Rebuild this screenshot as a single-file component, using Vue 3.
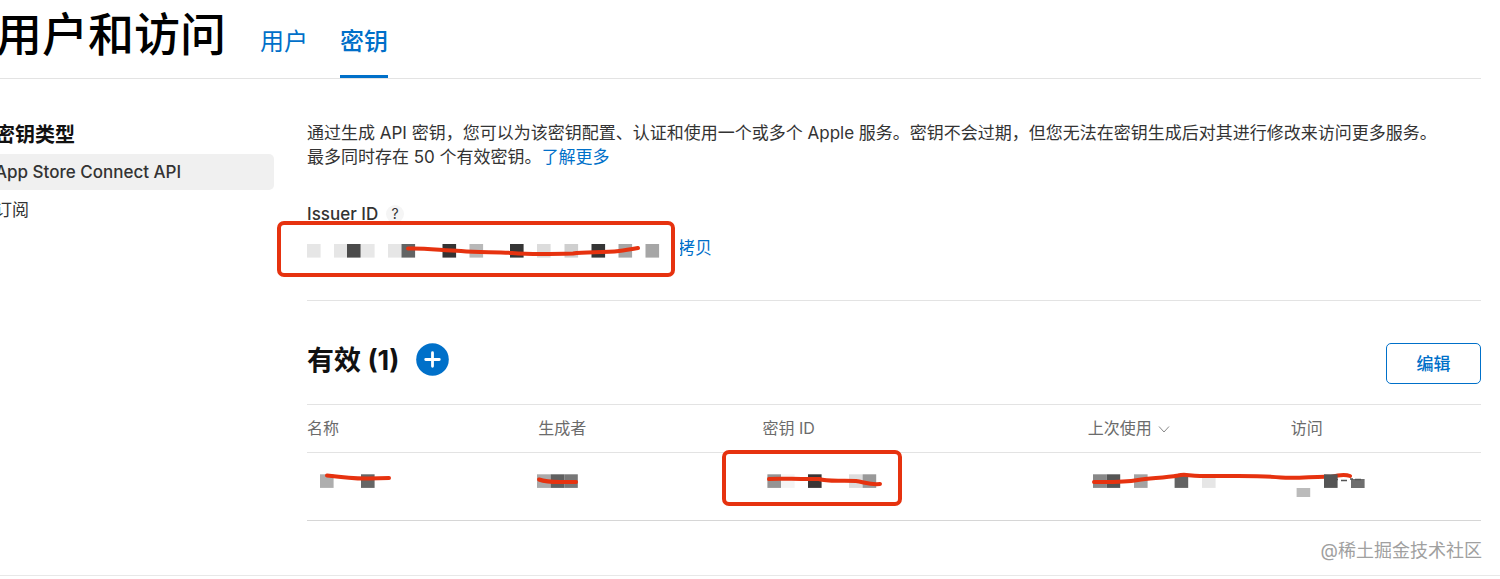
<template>
  <div class="page">
    <header class="page-header">
      <h1 class="page-title">用户和访问</h1>
      <nav class="tabs">
        <a
          v-for="tab in tabs"
          :key="tab"
          href="#"
          class="tab"
          :class="{ active: tab === activeTab }"
          @click.prevent="activeTab = tab"
          >{{ tab }}</a
        >
      </nav>
    </header>

    <div class="page-body">
      <aside class="sidebar">
        <h2 class="sidebar-title">密钥类型</h2>
        <a
          v-for="item in keyTypes"
          :key="item"
          href="#"
          class="sidebar-item"
          :class="{ active: item === activeType }"
          @click.prevent="activeType = item"
          >{{ item }}</a
        >
      </aside>

      <main class="content">
        <section class="intro">
          <p class="description">
            通过生成 API 密钥，您可以为该密钥配置、认证和使用一个或多个 Apple
            服务。密钥不会过期，但您无法在密钥生成后对其进行修改来访问更多服务。<br />最多同时存在 50
            个有效密钥。<a href="#">了解更多</a>
          </p>
          <div class="issuer-label">
            <span>Issuer ID</span>
            <button class="help-button" aria-label="帮助">?</button>
          </div>
          <div class="issuer-row">
            <div class="issuer-value">
              <svg class="mosaic" width="353" height="14" viewBox="0 0 353 14">
                <rect
                  v-for="(b, i) in issuerBlocks"
                  :key="i"
                  :x="b[0]"
                  y="0"
                  width="13.6"
                  height="13.6"
                  :fill="b[1]"
                />
                <path
                  class="scribble"
                  d="M101 4.500C118 4 132 6 154 7C172 9 188 7.500 205 9C222 10.500 248 10 266 9.500C278 7.500 296 9 312 7C319 6 325 5 331 4"
                />
              </svg>
              <span class="mark-box issuer-mark"></span>
            </div>
            <button class="copy-button">拷贝</button>
          </div>
        </section>

        <section class="keys">
          <div class="keys-header">
            <h2 class="keys-title">有效 (1)</h2>
            <button class="add-button" aria-label="添加">
              <svg width="33" height="33" viewBox="0 0 33 33">
                <circle cx="16.5" cy="16.5" r="16.3" fill="#0070c9" />
                <path
                  d="M16.500 9.700V23.300M9.700 16.500H23.300"
                  stroke="#fff"
                  stroke-width="2.800"
                  stroke-linecap="round"
                />
              </svg>
            </button>
            <button class="edit-button">编辑</button>
          </div>

          <table class="keys-table">
            <thead>
              <tr>
                <th class="col-name">名称</th>
                <th class="col-creator">生成者</th>
                <th class="col-id">密钥 ID</th>
                <th class="col-last">
                  上次使用
                  <svg class="sort-icon" width="12" height="8" viewBox="0 0 12 8">
                    <path d="M1 0.500L6 6L11 0.500" fill="none" stroke="#888" />
                  </svg>
                </th>
                <th>访问</th>
              </tr>
            </thead>
            <tbody>
              <tr>
                <td v-for="cell in keyRow" :key="cell.name">
                  <div class="cell-value">
                    <svg class="mosaic" width="120" height="14" viewBox="0 0 120 14">
                      <rect
                        v-for="(b, i) in cell.blocks"
                        :key="i"
                        :x="b[0]"
                        :y="b[2] || 0.3"
                        width="13.6"
                        :height="b[3] || 13.6"
                        :fill="b[1]"
                      />
                      <path
                        v-if="cell.name === 'access'"
                        d="M43 5.500H47M50 6.500H56M59 5H62M64 5.500H70"
                        stroke="#555"
                        stroke-width="1.500"
                      />
                      <path v-if="cell.line" class="scribble" :d="cell.line" />
                    </svg>
                    <span v-if="cell.name === 'id'" class="mark-box id-mark"></span>
                  </div>
                </td>
              </tr>
            </tbody>
          </table>
        </section>
      </main>
    </div>

    <footer class="page-footer">@稀土掘金技术社区</footer>
  </div>
</template>

<script setup>
import { ref } from 'vue'

const tabs = ['用户', '密钥']
const activeTab = ref('密钥')

const keyTypes = ['App Store Connect API', '订阅']
const activeType = ref('App Store Connect API')

// masked blocks: [x, color]
const issuerBlocks = [
  [0, '#e6e6e6'],
  [27, '#e6e6e6'],
  [40, '#4b4b4b'],
  [54, '#e8e8e8'],
  [81, '#e6e6e6'],
  [94.5, '#626464'],
  [135.5, '#353333'],
  [162.5, '#b8b8b8'],
  [203, '#353535'],
  [230, '#dcdcdc'],
  [257.5, '#cfcfcf'],
  [284.5, '#353535'],
  [311.5, '#a6a6a6'],
  [338.5, '#a6a6a6'],
]

// blocks: [x, color, y, height]
const keyRow = [
  {
    name: 'name',
    blocks: [
      [13, '#aeaeae'],
      [54, '#666'],
    ],
    line: 'M20 1.500C32 3 48 5 62 4.500L82 4',
  },
  {
    name: 'creator',
    blocks: [
      [-1, '#aaa'],
      [12.6, '#606060'],
      [26.2, '#777'],
    ],
    line: 'M1 5.500C8 8 14 8 22 8H38',
  },
  {
    name: 'id',
    blocks: [
      [5.4, '#949494'],
      [19, '#f4f4f4'],
      [46, '#3a3535'],
      [87, '#ddd'],
      [100.6, '#999'],
    ],
    line: 'M7 5C20 4 34 5.500 57 5C66 8 80 6 94 7C102 8 108 11 118 10',
  },
  {
    name: 'last',
    blocks: [
      [5, '#888'],
      [18.6, '#555'],
      [46, '#a3a3a3'],
      [86.6, '#636363'],
      [114, '#e6e6e6', 0.3, 13.6],
    ],
    line: 'M6 8C20 8 35 8.500 50 6C62 4 76 4 90 1.500C98 -0.500 100 2 112 2C144 2.500 170 1 193 3.500C210 5 228 2 243 3C250 1 257 0 262 2',
  },
  {
    name: 'access',
    blocks: [
      [5.6, '#bbb', 14, 9],
      [33, '#555'],
      [60, '#6e6e6e', 5, 9],
    ],
  },
]
</script>

<style>
body {
  margin: 0;
  background-color: #fff;
}
</style>

<style scoped>
.page {
  font-family: Inter, 'Noto Sans CJK SC', sans-serif;
  font-size: 17px;
  color: #333;
  overflow: hidden;
  border-bottom: 1px solid #e8e8e8;
}

h1,
h2,
p {
  margin: 0;
}

a {
  color: #0070c9;
  text-decoration: none;
}

button {
  padding: 0;
  border: none;
  background: none;
  font-family: inherit;
  cursor: pointer;
}

.page-header {
  display: flex;
  height: 78px;
  margin-right: 19px;
  border-bottom: 1px solid #e3e3e3;
}

.page-title {
  margin-left: -4px;
  font-size: 46px;
  line-height: 68px;
  font-weight: 500;
  color: #000;
}

.tabs {
  display: flex;
  gap: 32px;
  margin-left: 34px;
}

.tab {
  box-sizing: border-box;
  height: 78px;
  font-size: 24px;
  line-height: 84px;
}

.tab.active {
  font-weight: 500;
  border-bottom: 3px solid #0070c9;
}

.page-body {
  display: flex;
  gap: 33px;
  padding: 42px 19px 0 0;
}

.sidebar {
  flex: 0 0 274px;
}

.sidebar-title {
  margin: 0 0 5px -5px;
  font-size: 20px;
  line-height: 28px;
  font-weight: 700;
  color: #111;
}

.sidebar-item {
  display: block;
  margin-bottom: 2px;
  text-indent: -5px;
  line-height: 36px;
  color: #333;
  border-radius: 0 5px 5px 0;
}

.sidebar-item.active {
  background-color: #f0f0f0;
  font-weight: 500;
}

.content {
  flex: 1;
  min-width: 0;
}

.intro {
  padding-bottom: 42px;
  border-bottom: 1px solid #e3e3e3;
}

.description {
  line-height: 24px;
}

.issuer-label {
  display: flex;
  align-items: center;
  gap: 8px;
  margin-top: 33px;
  line-height: 24px;
  font-weight: 500;
}

.help-button {
  width: 18px;
  height: 18px;
  border-radius: 50%;
  background-color: #f5f5f5;
  font-size: 14px;
  line-height: 18px;
  color: #333;
}

.issuer-row {
  display: flex;
  align-items: flex-end;
  gap: 18px;
  margin-top: 12px;
}

.issuer-value,
.cell-value {
  position: relative;
}

.mosaic {
  display: block;
  overflow: visible;
}

.scribble {
  fill: none;
  stroke: #e6320f;
  stroke-width: 4;
  stroke-linecap: round;
  stroke-linejoin: round;
}

.mark-box {
  position: absolute;
  z-index: 1;
  box-sizing: border-box;
  border: 4px solid #e6320f;
  border-radius: 7px;
}

.issuer-mark {
  top: -23px;
  left: -30px;
  width: 398px;
  height: 56px;
  box-shadow: 5px 0 0 #fff;
}

.id-mark {
  top: -24px;
  left: -40px;
  width: 180px;
  height: 56px;
}

.copy-button {
  font-size: 17px;
  line-height: 20px;
  color: #0070c9;
}

.keys-header {
  display: flex;
  align-items: flex-start;
  margin: 42px 0 20px;
}

.keys-title {
  font-size: 27px;
  line-height: 36px;
  font-weight: 700;
  color: #111;
}

.add-button {
  height: 33px;
  margin-left: 17px;
}

.add-button svg {
  display: block;
}

.edit-button {
  width: 95px;
  height: 41px;
  padding-bottom: 3px;
  margin-left: auto;
  border: 1px solid #0070c9;
  border-radius: 5px;
  font-size: 17px;
  font-weight: 500;
  color: #0070c9;
}

.keys-table {
  width: 100%;
  table-layout: fixed;
  border-collapse: collapse;
  border-top: 1px solid #e3e3e3;
}

.keys-table th {
  height: 44px;
  padding: 0 0 3px;
  font-size: 16px;
  font-weight: 400;
  text-align: left;
  color: #6b6b6b;
  border-bottom: 1px solid #e3e3e3;
}

.keys-table td {
  height: 46px;
  padding: 21px 0 0;
  vertical-align: top;
  border-bottom: 1px solid #d6d6d6;
}

.col-name {
  width: 19.7%;
}

.col-creator {
  width: 19.1%;
}

.col-id {
  width: 27.7%;
}

.col-last {
  width: 17.3%;
}

.sort-icon {
  margin-left: 2px;
}

.page-footer {
  padding: 18px 18px 12px;
  font-size: 18px;
  line-height: 24px;
  text-align: right;
  color: #a0a0a0;
}
</style>
